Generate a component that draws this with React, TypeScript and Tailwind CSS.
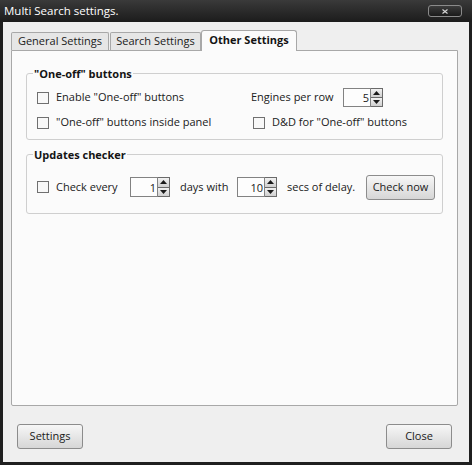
import React from "react";

function Checkbox() {
  return <div className="w-[12px] h-[12px] shrink-0 border border-[#707070] bg-[#f8f8f8]" />;
}

function Spin({ value, h }: { value: string; h: string }) {
  return (
    <div className={`flex w-[40px] ${h}`}>
      <div className="flex-1 border border-[#828282] bg-[#fdfdfd] flex items-center justify-end pr-[1px] leading-none">
        {value}
      </div>
      <div className="w-[12px] flex flex-col border border-l-0 border-[#6a6a6a]">
        <div className="flex-1 flex items-center justify-center bg-linear-to-b from-[#f2f2f2] to-[#cfcfcf] border-b border-[#6a6a6a]">
          <svg width="7" height="4" viewBox="0 0 7 4">
            <path d="M0 4 L3.5 0 L7 4 Z" fill="#1a1a1a" />
          </svg>
        </div>
        <div className="flex-1 flex items-center justify-center bg-linear-to-b from-[#f2f2f2] to-[#cfcfcf]">
          <svg width="7" height="4" viewBox="0 0 7 4">
            <path d="M0 0 L3.5 4 L7 0 Z" fill="#1a1a1a" />
          </svg>
        </div>
      </div>
    </div>
  );
}

function Button({ label, w }: { label: string; w: string }) {
  return (
    <div
      className={`${w} h-[25px] rounded-[3px] border border-[#8c8c8c] bg-linear-to-b from-[#f7f7f7] to-[#d6d6d6] flex items-center justify-center text-[11px] text-[#1a1a1a]`}
    >
      {label}
    </div>
  );
}

export default function App() {
  return (
    <div className="w-[472px] h-[465px] bg-[#1f1f1f] flex flex-col font-['Open_Sans',sans-serif] text-[11px] text-[#202020]">
      <div className="h-[22px] shrink-0 flex items-center justify-between pl-[4px] pr-[10px] bg-linear-to-b from-[#3a3a3a] to-[#1c1c1c]">
        <span className="text-white text-[11.5px]">Multi Search settings.</span>
        <div className="w-[34px] h-[12px] rounded-[3px] border border-[#8a8a8a] bg-linear-to-b from-[#3c3c3c] to-[#1a1a1a] flex items-center justify-center">
          <svg width="6" height="5" viewBox="0 0 6 5">
            <path d="M0.5 0.5 L5.5 4.5 M5.5 0.5 L0.5 4.5" stroke="#d8d8d8" strokeWidth="1.1" />
          </svg>
        </div>
      </div>
      <div className="flex-1 mx-[3px] mb-[3px] bg-[#efefef] flex flex-col pt-[8px] pl-[8px] pr-[11px]">
        <div className="flex items-end relative z-10">
          <div className="w-[98px] h-[18px] border border-b-0 border-[#a8a8a8] rounded-t-[2px] bg-[#e6e6e6] flex items-center justify-center">
            General Settings
          </div>
          <div className="ml-[1px] w-[91px] h-[18px] border border-b-0 border-[#a8a8a8] rounded-t-[2px] bg-[#e6e6e6] flex items-center justify-center">
            Search Settings
          </div>
          <div className="w-[96px] h-[21px] -mb-[1px] pb-[2px] border border-b-0 border-[#a8a8a8] rounded-t-[3px] bg-[#fbfbfb] flex items-center justify-center font-bold text-[#141414]">
            Other Settings
          </div>
        </div>
        <div className="h-[356px] shrink-0 border border-[#a8a8a8] rounded-b-[2px] bg-[#fbfbfb] px-[14px] pt-[15px]">
          <fieldset className="border border-[#cfcfcf] rounded-[3px]">
            <legend className="ml-[6px] px-[1px] leading-[15px] font-bold text-[#141414]">"One-off" buttons</legend>
            <div className="pl-[10px] pt-[7px] pb-[7px] flex flex-col gap-[6px]">
              <div className="flex items-center h-[19px]">
                <div className="w-[214px] flex items-center">
                  <Checkbox />
                  <span className="ml-[7px]">Enable "One-off" buttons</span>
                </div>
                <span className="w-[92px]">Engines per row</span>
                <Spin value="5" h="h-[19px]" />
              </div>
              <div className="flex items-center h-[19px]">
                <div className="w-[214px] flex items-center">
                  <Checkbox />
                  <span className="ml-[7px]">"One-off" buttons inside panel</span>
                </div>
                <div className="ml-[2px] flex items-center">
                  <Checkbox />
                  <span className="ml-[7px]">D&amp;D for "One-off" buttons</span>
                </div>
              </div>
            </div>
          </fieldset>
          <fieldset className="mt-[7px] border border-[#cfcfcf] rounded-[3px]">
            <legend className="ml-[6px] px-[1px] leading-[15px] font-bold text-[#141414]">Updates checker</legend>
            <div className="pl-[10px] pt-[6px] pb-[7px] flex items-center h-[38px] box-content">
              <div className="flex items-center h-[25px]">
                <Checkbox />
                <span className="ml-[7px] w-[74px]">Check every</span>
                <Spin value="1" h="h-[20px]" />
                <span className="ml-[10px] w-[57px]">days with</span>
                <Spin value="10" h="h-[20px]" />
                <span className="ml-[10px] w-[79px]">secs of delay.</span>
                <Button label="Check now" w="w-[69px]" />
              </div>
            </div>
          </fieldset>
        </div>
        <div className="mt-[18px] flex justify-between px-[6px]">
          <Button label="Settings" w="w-[66px]" />
          <Button label="Close" w="w-[66px]" />
        </div>
      </div>
    </div>
  );
}
